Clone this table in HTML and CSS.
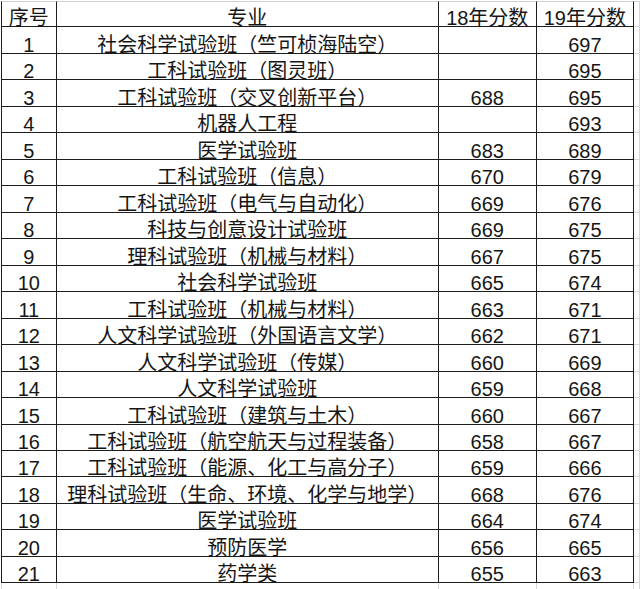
FILE: index.html
```html
<!DOCTYPE html>
<html lang="zh-CN">
<head>
<meta charset="utf-8">
<title>分数表</title>
<link rel="stylesheet" href="styles.css">
</head>
<body>
<table class="scores">
  <colgroup>
    <col class="c-no"><col class="c-major"><col class="c-score"><col class="c-score"><col class="c-pad">
  </colgroup>
  <tbody>
    <tr class="head"><td>序号</td><td>专业</td><td>18年分数</td><td>19年分数</td><td class="pad"></td></tr>
    <tr><td>1</td><td>社会科学试验班（竺可桢海陆空）</td><td></td><td>697</td><td class="pad"></td></tr>
    <tr><td>2</td><td>工科试验班（图灵班）</td><td></td><td>695</td><td class="pad"></td></tr>
    <tr><td>3</td><td>工科试验班（交叉创新平台）</td><td>688</td><td>695</td><td class="pad"></td></tr>
    <tr><td>4</td><td>机器人工程</td><td></td><td>693</td><td class="pad"></td></tr>
    <tr><td>5</td><td>医学试验班</td><td>683</td><td>689</td><td class="pad"></td></tr>
    <tr><td>6</td><td>工科试验班（信息）</td><td>670</td><td>679</td><td class="pad"></td></tr>
    <tr><td>7</td><td>工科试验班（电气与自动化）</td><td>669</td><td>676</td><td class="pad"></td></tr>
    <tr><td>8</td><td>科技与创意设计试验班</td><td>669</td><td>675</td><td class="pad"></td></tr>
    <tr><td>9</td><td>理科试验班（机械与材料）</td><td>667</td><td>675</td><td class="pad"></td></tr>
    <tr><td>10</td><td>社会科学试验班</td><td>665</td><td>674</td><td class="pad"></td></tr>
    <tr><td>11</td><td>工科试验班（机械与材料）</td><td>663</td><td>671</td><td class="pad"></td></tr>
    <tr><td>12</td><td>人文科学试验班（外国语言文学）</td><td>662</td><td>671</td><td class="pad"></td></tr>
    <tr><td>13</td><td>人文科学试验班（传媒）</td><td>660</td><td>669</td><td class="pad"></td></tr>
    <tr><td>14</td><td>人文科学试验班</td><td>659</td><td>668</td><td class="pad"></td></tr>
    <tr><td>15</td><td>工科试验班（建筑与土木）</td><td>660</td><td>667</td><td class="pad"></td></tr>
    <tr><td>16</td><td>工科试验班（航空航天与过程装备）</td><td>658</td><td>667</td><td class="pad"></td></tr>
    <tr><td>17</td><td>工科试验班（能源、化工与高分子）</td><td>659</td><td>666</td><td class="pad"></td></tr>
    <tr><td>18</td><td>理科试验班（生命、环境、化学与地学）</td><td>668</td><td>676</td><td class="pad"></td></tr>
    <tr><td>19</td><td>医学试验班</td><td>664</td><td>674</td><td class="pad"></td></tr>
    <tr><td>20</td><td>预防医学</td><td>656</td><td>665</td><td class="pad"></td></tr>
    <tr><td>21</td><td>药学类</td><td>655</td><td>663</td><td class="pad"></td></tr>
    <tr class="tail"><td></td><td></td><td></td><td></td><td class="pad"></td></tr>
  </tbody>
</table>
</body>
</html>
```

FILE: styles.css
```css
html, body {
  margin: 0;
  padding: 0;
  background: #ffffff;
}

body {
  overflow: hidden;
}

.scores {
  border-collapse: separate;
  border-spacing: 0;
  table-layout: fixed;
  margin: 1px 0 0 1px;
  font-family: "Liberation Sans", "Noto Sans CJK SC", sans-serif;
  font-size: 20px;
  color: #161616;
}

.c-no { width: 56px; }
.c-major { width: 383px; }
.c-score { width: 98px; }
.c-pad { width: 6px; }

.scores tr {
  height: 26.476px;
}

.scores td {
  box-sizing: border-box;
  padding: 0;
  text-align: center;
  vertical-align: bottom;
  line-height: 16px;
  white-space: nowrap;
  border-right: 1px solid #1c1c1c;
  border-bottom: 1px solid #1c1c1c;
}

.scores td:first-child {
  border-left: 1px solid #1c1c1c;
}

.scores .head td {
  border-top: 1px solid #d0d0d0;
}

.scores td.pad {
  border-right: 1px solid #d6d6d6;
  border-bottom: 1px solid #d6d6d6;
}

.scores .head td.pad {
  border-top: 1px solid #d6d6d6;
}

.scores .tail td {
  border-bottom: none;
  border-right: 1px solid #d6d6d6;
}

.scores .tail td:first-child {
  border-left: 1px solid #d6d6d6;
}
```
